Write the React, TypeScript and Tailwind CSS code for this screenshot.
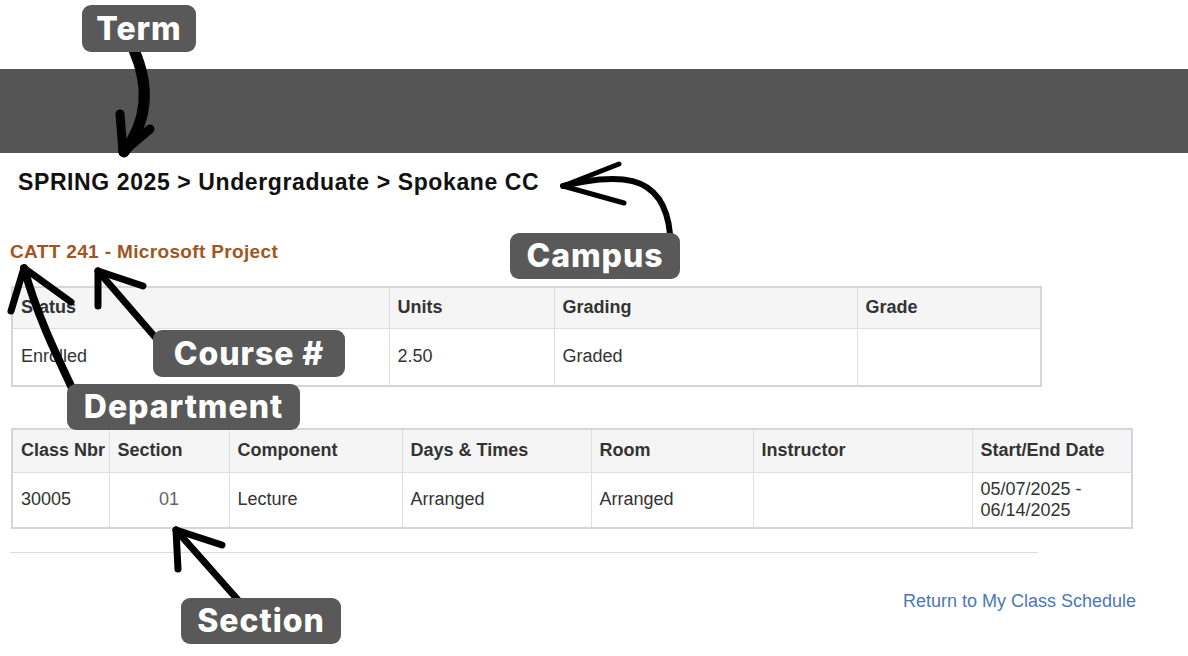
import React from "react";

const cell = "border border-[#dcdfe4] px-[8px] align-middle";
const head = `${cell} bg-[#f5f5f6] font-bold text-[#333]`;

function Callout({ text, className }: { text: string; className: string }) {
  return (
    <div
      className={`absolute flex items-center justify-center rounded-[9px] bg-[#595959] text-white font-extrabold text-[32px] tracking-[0.03em] leading-none font-['Inter',sans-serif] ${className}`}
    >
      {text}
    </div>
  );
}

function Arrows() {
  return (
    <svg
      className="absolute inset-0 pointer-events-none"
      width={1188}
      height={656}
      viewBox="0 0 1188 656"
      fill="none"
      stroke="#000"
      strokeLinecap="round"
      strokeLinejoin="round"
    >
      {/* term */}
      <path d="M134 50 C 148 82, 150 118, 124 152" strokeWidth={11} />
      <path d="M120 114 L123 152 L150 129" strokeWidth={9} />
      {/* campus */}
      <path d="M563 186 C 612 175, 664 168, 670 234" strokeWidth={6} />
      <path d="M619 164 L563 186 L624 203" strokeWidth={5} />
      {/* department */}
      <path d="M24 268 C 36 312, 54 350, 72 388" strokeWidth={8} />
      <path d="M11 311 L24 268 L71 302" strokeWidth={7} />
      {/* course number */}
      <path d="M98 271 L155 337" strokeWidth={7} />
      <path d="M98 306 L98 271 L143 286" strokeWidth={7} />
      {/* section */}
      <path d="M176 530 L238 600" strokeWidth={7} />
      <path d="M178 569 L176 530 L222 545" strokeWidth={7} />
    </svg>
  );
}

export default function App() {
  return (
    <div className="relative w-[1188px] h-[656px] overflow-hidden bg-white text-[#333] font-['Liberation_Sans',Arial,sans-serif]">
      <div className="h-[69px]" />
      <div className="h-[84px] bg-[#555555]" />

      <div className="pl-[11px]">
        <h1 className="mt-[16px] pl-[7px] text-[23px] leading-[27px] font-bold text-[#111] tracking-[0.6px]">
          SPRING 2025 &gt; Undergraduate &gt; Spokane CC
        </h1>

        <h2 className="mt-[45px] -ml-[1px] text-[19px] leading-[22px] font-bold text-[#a0561e] tracking-[0.35px]">
          CATT 241 - Microsoft Project
        </h2>

        <table className="mt-[23px] w-[1029px] table-fixed border-collapse border-2 border-[#d3d7dc] text-[18px]">
          <colgroup>
            <col className="w-[377px]" />
            <col className="w-[165px]" />
            <col className="w-[303px]" />
            <col className="w-[184px]" />
          </colgroup>
          <thead>
            <tr className="h-[41px]">
              <th className={`${head} text-left`}>Status</th>
              <th className={`${head} text-left`}>Units</th>
              <th className={`${head} text-left`}>Grading</th>
              <th className={`${head} text-left`}>Grade</th>
            </tr>
          </thead>
          <tbody>
            <tr className="h-[58px]">
              <td className={cell}>Enrolled</td>
              <td className={cell}>2.50</td>
              <td className={cell}>Graded</td>
              <td className={cell}></td>
            </tr>
          </tbody>
        </table>

        <table className="mt-[41px] w-[1120px] table-fixed border-collapse border-2 border-[#d3d7dc] text-[18px]">
          <colgroup>
            <col className="w-[97px]" />
            <col className="w-[120px]" />
            <col className="w-[173px]" />
            <col className="w-[189px]" />
            <col className="w-[162px]" />
            <col className="w-[219px]" />
            <col className="w-[160px]" />
          </colgroup>
          <thead>
            <tr className="h-[43px]">
              <th className={`${head} text-left whitespace-nowrap`}>Class Nbr</th>
              <th className={`${head} text-left`}>Section</th>
              <th className={`${head} text-left`}>Component</th>
              <th className={`${head} text-left`}>Days &amp; Times</th>
              <th className={`${head} text-left`}>Room</th>
              <th className={`${head} text-left`}>Instructor</th>
              <th className={`${head} text-left whitespace-nowrap`}>Start/End Date</th>
            </tr>
          </thead>
          <tbody>
            <tr className="h-[56px]">
              <td className={cell}>30005</td>
              <td className={`${cell} text-center text-[#666]`}>01</td>
              <td className={cell}>Lecture</td>
              <td className={cell}>Arranged</td>
              <td className={cell}>Arranged</td>
              <td className={cell}></td>
              <td className={`${cell} leading-[21px]`}>
                05/07/2025 -
                <br />
                06/14/2025
              </td>
            </tr>
          </tbody>
        </table>

        <div className="mt-[23px] -ml-[1px] w-[1028px] h-px bg-[#dadada]" />
      </div>

      <div className="mt-[38px] pr-[52px] flex justify-end">
        <a className="text-[18px] leading-[21px] text-[#4a78b5]">Return to My Class Schedule</a>
      </div>

      <Arrows />

      <Callout text="Term" className="left-[82px] top-[5px] w-[114px] h-[47px]" />
      <Callout text="Campus" className="left-[510px] top-[233px] w-[170px] h-[46px]" />
      <Callout text="Course #" className="left-[153px] top-[330px] w-[192px] h-[47px]" />
      <Callout text="Department" className="left-[67px] top-[384px] w-[233px] h-[46px]" />
      <Callout text="Section" className="left-[181px] top-[598px] w-[160px] h-[46px]" />
    </div>
  );
}
